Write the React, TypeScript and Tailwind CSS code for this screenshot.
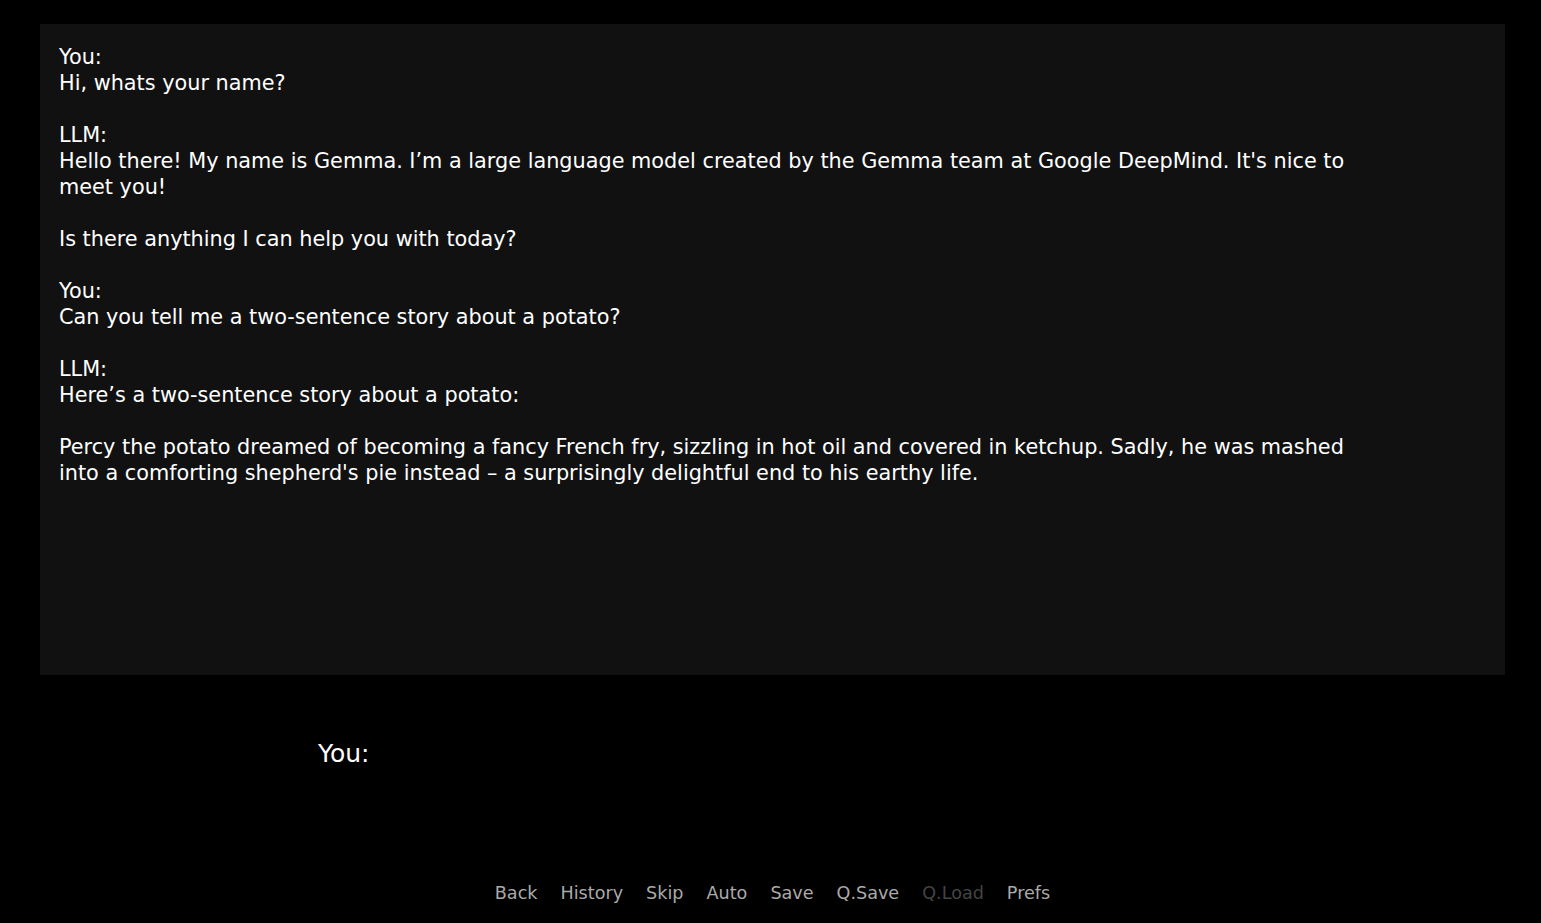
const transcript = `You:
Hi, whats your name?

LLM:
Hello there! My name is Gemma. I’m a large language model created by the Gemma team at Google DeepMind. It's nice to meet you!

Is there anything I can help you with today?

You:
Can you tell me a two-sentence story about a potato?

LLM:
Here’s a two-sentence story about a potato:

Percy the potato dreamed of becoming a fancy French fry, sizzling in hot oil and covered in ketchup. Sadly, he was mashed into a comforting shepherd's pie instead – a surprisingly delightful end to his earthy life.`;

const quickMenu = [
  { label: "Back", enabled: true },
  { label: "History", enabled: true },
  { label: "Skip", enabled: true },
  { label: "Auto", enabled: true },
  { label: "Save", enabled: true },
  { label: "Q.Save", enabled: true },
  { label: "Q.Load", enabled: false },
  { label: "Prefs", enabled: true },
];

export default function App() {
  return (
    <div
      className="h-screen w-full bg-black flex flex-col overflow-hidden"
      style={{ fontFamily: '"DejaVu Sans", sans-serif' }}
    >
      {/* chat log panel */}
      <div className="ml-10 mr-9 mt-6 h-[651px] bg-[#111111] pt-[20px] pl-[19px]">
        <p className="max-w-[1300px] whitespace-pre-wrap text-[20.8px] leading-[26px] text-white">
          {transcript}
        </p>
      </div>

      {/* speaker name */}
      <div className="mt-[65px] pl-[318px] text-[25px] leading-[28px] text-white">You:</div>

      {/* quick menu */}
      <div className="mt-auto pb-[18px] pl-1 flex justify-center gap-[23px] text-[17.6px] leading-[24px]">
        {quickMenu.map((item) => (
          <span
            key={item.label}
            className={item.enabled ? "text-[#aaaaaa]" : "text-[#444444]"}
          >
            {item.label}
          </span>
        ))}
      </div>
    </div>
  );
}
